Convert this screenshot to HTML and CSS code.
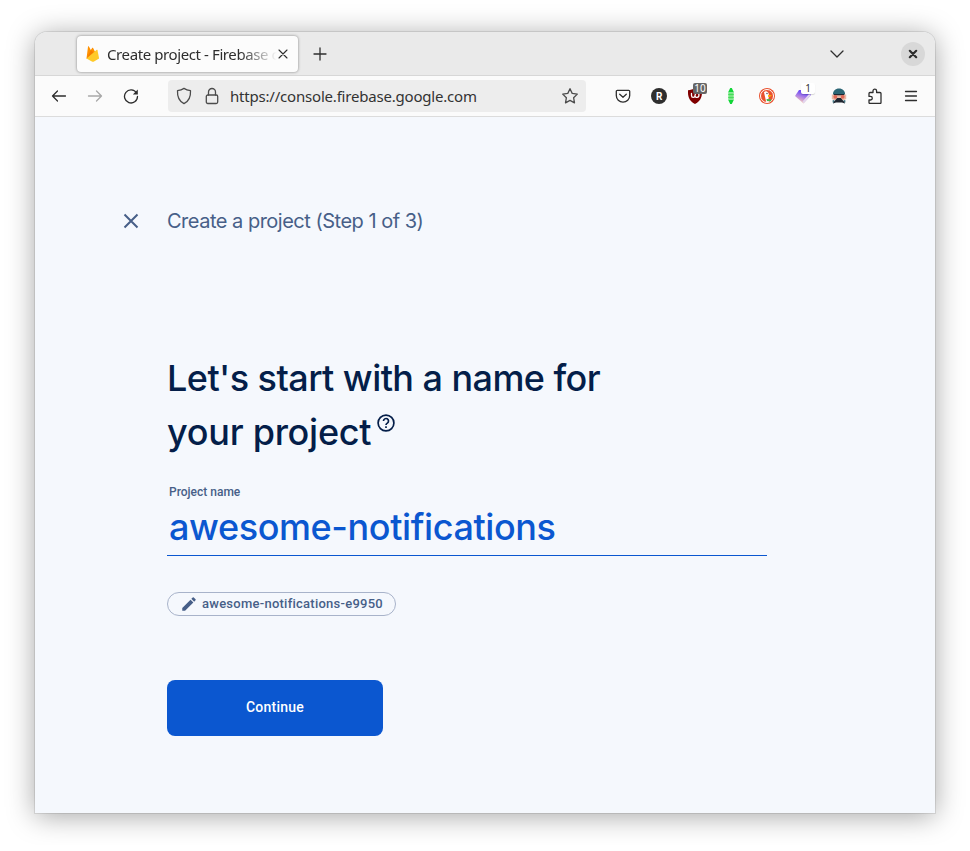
FILE: index.html
```html
<!DOCTYPE html>
<html lang="en">
<head>
<meta charset="utf-8">
<title>Create project - Firebase console</title>
<link rel="stylesheet" href="styles.css">
</head>
<body>
<div class="window">
  <header class="titlebar">
    <div class="tab">
      <svg class="flame" width="16" height="18" viewBox="0 0 16 18"><path fill="#ff9100" d="M1.500 13.500 3 1.800c.1-.5.7-.6.9-.2l1.900 3.300L7.200 3c.2-.4.7-.4.9 0l5 10z"/><path fill="#f57c00" d="M1.500 13.500 9 8 6 5z"/><path fill="#ffca28" d="m1.500 13.500 10-8.600c.4-.3.9-.1 1 .3l1.600 8.300-5.500 3.200c-.4.2-.9.2-1.300 0z"/></svg>
      <span class="tab-title">Create project - Firebase c</span>
      <svg class="tab-close" width="10" height="10" viewBox="0 0 10 10"><path class="line thin" d="m1 1 8 8M9 1 1 9"/></svg>
    </div>
    <svg class="plus" width="14" height="14" viewBox="0 0 14 14"><path class="line" d="M7 1v12M1 7h12"/></svg>
    <svg class="chevron" width="14" height="8" viewBox="0 0 14 8"><path class="line" d="m1 1 6 6 6-6"/></svg>
    <div class="close"><svg width="10" height="10" viewBox="0 0 10 10"><path class="line bold" d="m1.800 1.800 6.400 6.400M8.200 1.800l-6.400 6.400"/></svg></div>
  </header>
  <nav class="toolbar">
    <div class="nav-icons">
      <svg width="16" height="16" viewBox="0 0 16 16"><path class="line" d="M14.500 8H1.500M6.500 3 1.500 8l5 5"/></svg>
      <svg class="dim" width="16" height="16" viewBox="0 0 16 16"><path class="line" d="M1.500 8h13M9.500 3l5 5-5 5"/></svg>
      <svg width="16" height="16" viewBox="0 0 16 16"><path class="line" d="M13.500 5A6.500 6.500 0 1 0 14.500 8.500"/><path fill="#2e2e2e" d="M14.800 1.500v5H9.800z"/></svg>
    </div>
    <div class="urlbar">
      <svg width="16" height="18" viewBox="0 0 16 18"><path class="line gray" d="M8 1.400c2 1.400 4 2 6.500 2.300.3 5.300-1.200 10.300-6.500 12.900C2.700 14 1.200 9 1.500 3.700 4 3.400 6 2.800 8 1.400z"/></svg>
      <svg class="lock" width="14" height="18" viewBox="0 0 14 18"><rect class="line gray" x="1.300" y="8" width="11.400" height="8.500" rx="1.500"/><path class="line gray" d="M3.500 8V5a3.500 3.500 0 0 1 7 0v3"/></svg>
      <span class="url">https://console.firebase.google.com</span>
      <svg class="star" width="18" height="18" viewBox="0 0 18 18"><path class="line gray" d="m9 1.700 2.200 4.700 5.100.7-3.700 3.600.9 5.200L9 13.400l-4.500 2.500.9-5.200-3.700-3.600 5.100-.7z"/></svg>
    </div>
    <div class="extensions">
      <svg viewBox="0 0 16 16"><path class="line" d="M2.300 2.300h11.400a1 1 0 0 1 1 1v4.200a6.700 6.700 0 0 1-13.400 0V3.300a1 1 0 0 1 1-1z"/><path class="line" d="m4.700 6.300 3.300 3 3.300-3"/></svg>
      <svg viewBox="0 0 16 16"><circle cx="8" cy="8" r="8" fill="#2e2e2e"/><text class="r" x="8.200" y="11.600">R</text></svg>
      <div class="ext"><svg viewBox="0 0 16 16"><path fill="#800000" d="M8 0c2 1.500 4.500 2 7 2.200.2 6-.6 10.400-7 13.800C1.600 12.600.8 8.200 1 2.200 3.500 2 6 1.500 8 0z"/><path class="line white" d="M4.500 5.500v2c0 2.500 3.500 2.500 3.500 0 0 2.500 4 2.500 4-.5S8 5 8 7.500"/></svg><span class="badge">10</span></div>
      <svg viewBox="0 0 16 16"><path fill="#12d638" d="M7.200 0h1.600L11 4.500H5zM5 11.500h6L8.800 16H7.200z"/><path fill="#78e783" d="M5.300 5h5.400v6H5.300z"/><path stroke="#45dc5b" d="M5.300 6.500h5.400M5.300 9.500h5.400"/></svg>
      <svg viewBox="0 0 16 16"><circle cx="8" cy="8" r="8" fill="#e9512e"/><circle cx="8" cy="8" r="6.500" fill="#e9512e" stroke="#fff"/><path fill="#fff" d="M5 4.200c1.700-1.800 4.200-.9 4.700 1.600l.3 2.700-.6 2 .8 3.300-3 .1z"/><path fill="#ffb400" d="m9 7 4 .3-1.500 1.200L9 9z"/><path fill="#43b649" d="m7.500 11 4.500.3v2L8 13z"/><circle cx="8" cy="5.500" r=".7" fill="#334"/></svg>
      <div class="ext"><svg viewBox="0 0 16 16"><defs><linearGradient id="gem" x1=".2" y1="1" x2=".6" y2="0"><stop offset=".1" stop-color="#f8cbb5"/><stop offset=".45" stop-color="#b98be0"/><stop offset=".8" stop-color="#7350f5"/></linearGradient></defs><path fill="url(#gem)" d="M4 2h8l4 5-7.500 8.500L0 8z"/><path fill="#e2d5ef" d="m16 7-7.500 8.500-1-2L14 6z"/></svg><span class="badge light">1</span></div>
      <svg viewBox="0 0 16 16"><path fill="#2b6675" d="M2 7C1.500 3 4.500.5 8 .5S14.500 3 14 7z"/><path fill="#e9b8a5" d="M.8 6.500h14.400v4.500L13 12H3L.8 11z"/><path fill="#202631" d="M2 15.500c0-2 2.500-3 4-5.500h4c1.500 2.500 4 3.500 4 5.500l-3-1H5zM3 6h10v1.200H3z"/><path fill="#2b6675" d="M1.500 12.500 3.500 12 2 15.500zM14.500 12.500l-2-.5 1.500 3.500z"/><circle cx="4.300" cy="8.800" r="1.900" fill="#df6957"/><circle cx="11.700" cy="8.800" r="1.900" fill="#df6957"/></svg>
      <svg viewBox="0 0 16 16"><path class="line" d="M2 5.500q0-1 1-1h3V3a1.800 1.800 0 0 1 3.600 0v1.500H13q1 0 1 1v9q0 1-1 1H3q-1 0-1-1V12h1.500a1.800 1.800 0 0 0 0-3.600H2z"/></svg>
      <svg viewBox="0 0 16 16"><path class="line" d="M2.500 3.500h11M2.500 8h11M2.500 12.500h11"/></svg>
    </div>
  </nav>
  <main class="page">
    <div class="step">
      <svg width="16" height="16" viewBox="0 0 16 16"><path d="m1.500 1.500 13 13M14.500 1.500l-13 13" stroke="#475f88" stroke-width="2"/></svg>
      <span class="step-title">Create a project (Step 1 of 3)</span>
    </div>
    <section class="form">
      <h1><span class="h-one">Let's start with a name for</span><br><span class="h-two">your project</span><svg class="help" width="18" height="18" viewBox="0 0 18 18"><circle cx="9" cy="9" r="7.900"/><path d="M6.500 7a2.500 2.500 0 1 1 3.900 2.100C9.500 9.700 9 10 9 11"/><path d="M9 12.200V14"/></svg></h1>
      <label>Project name</label>
      <div class="field"><span>awesome-notifications</span></div>
      <div class="chip"><svg width="18" height="18" viewBox="0 0 24 24"><path fill="#475f88" d="M3 17.250V21h3.750L17.810 9.940l-3.750-3.750zM20.710 7.040a1 1 0 0 0 0-1.410l-2.340-2.340a1 1 0 0 0-1.410 0l-1.830 1.830 3.750 3.750z"/></svg><span>awesome-notifications-e9950</span></div>
      <button>Continue</button>
    </section>
  </main>
</div>
</body>
</html>
```
FILE: styles.css
```css
* { box-sizing: border-box; }
body { margin: 0; padding: 32px 35px; background: #fff; }
svg { display: block; flex: none; }
.window { width: 900px; height: 781px; border-radius: 12px 12px 0 0; overflow: hidden; background: #f5f8fd; box-shadow: 0 0 0 1px rgba(0,0,0,.09), 0 3px 28px rgba(0,0,0,.36); }
.line { fill: none; stroke: #2e2e2e; stroke-width: 1.3; stroke-linecap: round; stroke-linejoin: round; }
.gray { stroke: #4c4c4c; }
.white { stroke: #fff; }
.thin { stroke-width: 1.1; }
.bold { stroke-width: 2.2; }
.dim { opacity: .4; }
.titlebar { height: 44px; background: #eaeaea; border-bottom: 1px solid #d7d7d7; display: flex; align-items: center; padding: 0 10px 0 42px; }
.tab { width: 221px; height: 36px; border-radius: 4px; background: #fcfcfc; box-shadow: 0 0 3px rgba(0,0,0,.45); display: flex; align-items: center; padding: 0 11px 0 8px; }
.tab-title { flex: none; font: 15px/20px "Noto Sans", sans-serif; letter-spacing: -.4px; color: #2e2e2e; width: 170px; margin-left: 6px; white-space: nowrap; -webkit-mask-image: linear-gradient(90deg, #000 78%, transparent 100%); mask-image: linear-gradient(90deg, #000 78%, transparent 100%); }
.tab-close { margin-left: 1px; }
.plus { margin-left: 15px; }
.chevron { margin-left: auto; margin-right: 57px; }
.close { width: 24px; height: 24px; border-radius: 50%; background: #d8d8d8; display: grid; place-items: center; }
.toolbar { height: 41px; background: #fbfbfb; border-bottom: 1px solid #dcdcdc; display: flex; align-items: center; padding: 0 16px; }
.nav-icons { display: flex; gap: 20px; }
.urlbar { width: 418px; height: 32px; margin-left: 29px; border-radius: 4px; background: #ededed; display: flex; align-items: center; padding: 0 7px 0 8px; }
.lock { margin-left: 13px; }
.url { margin-left: 11px; font: 15px/20px "Noto Sans", sans-serif; letter-spacing: -.2px; color: #333; white-space: nowrap; }
.star { margin-left: auto; }
.extensions { display: flex; gap: 20px; margin-left: 29px; }
.extensions svg { width: 16px; height: 16px; }
.r { font: bold 10px Roboto, sans-serif; fill: #fff; text-anchor: middle; }
.ext { position: relative; width: 16px; height: 16px; }
.badge { position: absolute; left: 6px; top: -5px; height: 11px; width: 14px; border-radius: 2px; background: #666; color: #fff; font: 10px/11px "Noto Sans", sans-serif; text-align: center; }
.badge.light { background: #fff; color: #333; box-shadow: 0 1px 1px rgba(0,0,0,.15); }
.page { padding: 92px 0 0 88px; }
.step { display: flex; align-items: center; height: 24px; gap: 28px; }
.step-title { font: 20px/24px Inter, sans-serif; letter-spacing: -.5px; color: #475f88; white-space: nowrap; }
.form { margin: 117px 0 0 44px; width: 600px; }
h1 { margin: 0; padding-top: 1px; height: 108px; font: 500 36px/54px Inter, sans-serif; color: #041e49; white-space: nowrap; }
.h-one { letter-spacing: -.56px; }
.h-two { letter-spacing: -.26px; }
.help { display: inline-block; margin-left: 6px; vertical-align: 13px; fill: none; stroke: #041e49; stroke-width: 1.700; }
label { display: block; margin-top: 26px; padding-left: 2px; font: 500 12px/16px Roboto, sans-serif; color: #475f88; }
.field { height: 56px; border-bottom: 1px solid #0b57d0; padding-left: 2px; font: 500 36px/54px Inter, sans-serif; letter-spacing: -.4px; color: #0b57d0; white-space: nowrap; }
.chip { display: flex; align-items: center; width: 229px; height: 24px; margin-top: 36px; padding-left: 12px; border: 1px solid #a8b3ca; border-radius: 12px; font: 500 13px/22px Roboto, sans-serif; letter-spacing: .25px; color: #475f88; }
.chip span { margin-left: 4px; }
button { display: block; width: 216px; height: 56px; margin-top: 64px; padding: 0 0 2px; border: 0; border-radius: 8px; background: #0b57d0; color: #fff; font: 500 14px/20px Roboto, sans-serif; letter-spacing: .25px; }
```
